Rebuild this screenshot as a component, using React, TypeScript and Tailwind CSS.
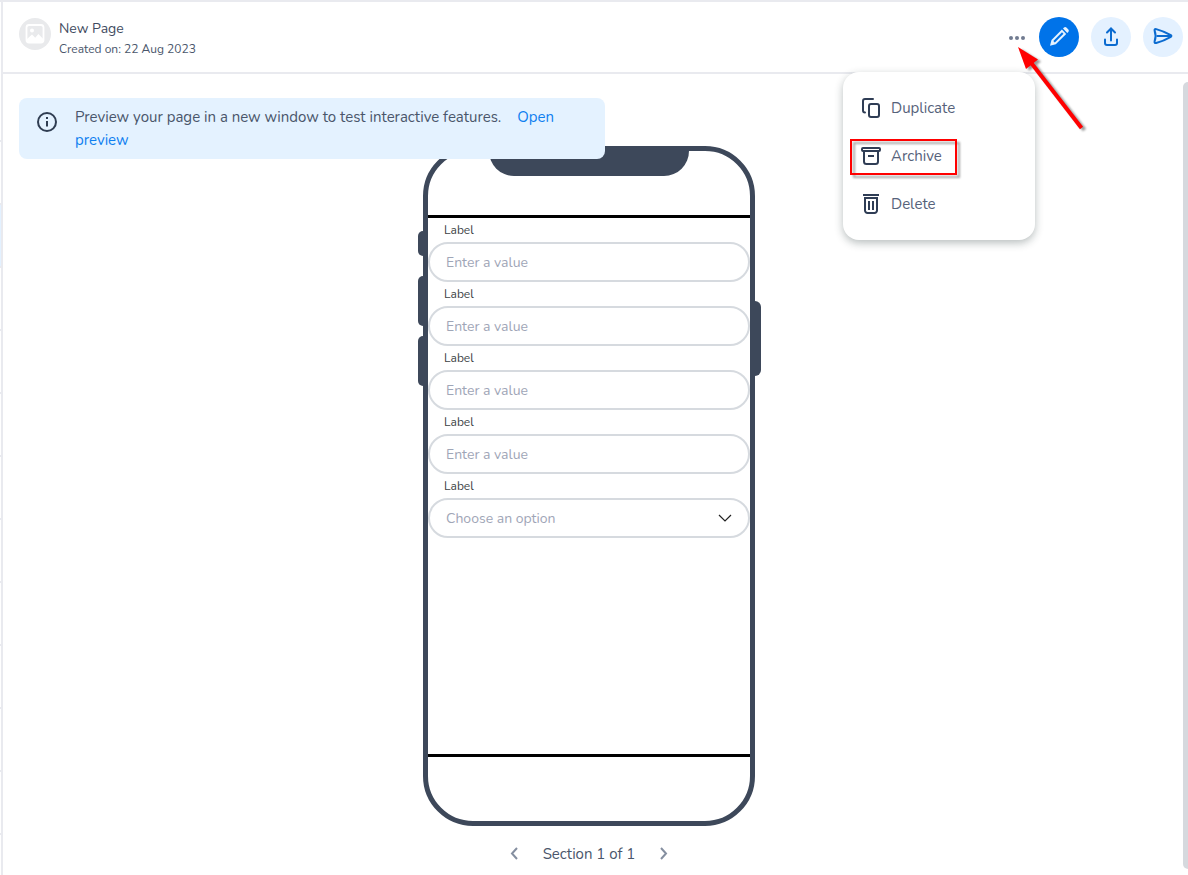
import React, { useState } from 'react';

const sidebarRows = Array.from({ length: 11 }, (_, i) => i);
const textFields = ['field-1', 'field-2', 'field-3', 'field-4'];

function ImageIcon() {
  return (
    <svg className="size-6" viewBox="0 0 24 24" fill="none">
      <rect x="3.5" y="3" width="17" height="17.5" rx="2.5" stroke="white" strokeWidth="1.8" />
      <circle cx="9" cy="8.6" r="2" fill="white" />
      <path d="M4 17l5-4.5 3.2 3.2 3.2-3.7 4.6 4.8V20H4z" fill="white" />
    </svg>
  );
}

function InfoIcon() {
  return (
    <svg className="size-6 shrink-0 text-[#2f3d52]" viewBox="0 0 24 24" fill="none" stroke="currentColor" strokeWidth={2}>
      <circle cx="12" cy="12" r="9" />
      <path d="M12 11v5.5M12 7v2" />
    </svg>
  );
}

function PencilIcon() {
  return (
    <svg className="size-6" viewBox="0 0 24 24" fill="currentColor">
      <path
        fillRule="evenodd"
        d="M3 20.8l1.5-5.8L14.9 4.6l4.3 4.3L8.8 19.3zM6.3 16l1.5 1.5 8.7-8.7-1.5-1.5z"
      />
      <path d="M16 3.6l1-1a1.7 1.7 0 0 1 2.4 0l1.9 1.9a1.7 1.7 0 0 1 0 2.4l-1 1z" />
    </svg>
  );
}

function UploadIcon() {
  return (
    <svg className="size-6" viewBox="0 0 24 24" fill="none" stroke="currentColor" strokeWidth={2} strokeLinecap="round">
      <path d="M12 15.5V4M8 7.5l4-4 4 4" />
      <path d="M6 14.5V18a2 2 0 0 0 2 2h8a2 2 0 0 0 2-2v-3.5" />
    </svg>
  );
}

function SendIcon() {
  return (
    <svg className="size-6" viewBox="0 0 24 24" fill="none" stroke="currentColor" strokeWidth={2} strokeLinejoin="round">
      <path d="M5.2 4.1Q3.2 3.6 3.6 5.6Q5.600 11 3.600 16.400Q3.200 18.500 5.200 18Q12.500 16 19.800 11.800Q21 11 19.800 10.200Q12.500 6 5.200 4.100Z" />
      <path d="M5.500 11H20" />
    </svg>
  );
}

function DuplicateIcon() {
  return (
    <svg className="size-6" viewBox="0 0 24 24" fill="none" stroke="currentColor" strokeWidth={2}>
      <rect x="10" y="8" width="10" height="13" rx="2" />
      <path d="M6 16.500a2 2 0 0 1-2-2V5a2 2 0 0 1 2-2h8" strokeLinecap="round" />
    </svg>
  );
}

function ArchiveIcon() {
  return (
    <svg className="size-6" viewBox="0 0 24 24" fill="none" stroke="currentColor" strokeWidth={2}>
      <rect x="3" y="4" width="18" height="3" rx="1" />
      <path d="M5 7.500V17.500a2.500 2.500 0 0 0 2.500 2.500h9a2.500 2.500 0 0 0 2.500-2.500V7.500M9 12h6" />
    </svg>
  );
}

function DeleteIcon() {
  return (
    <svg className="size-6" viewBox="0 0 24 24" fill="none" stroke="currentColor" strokeWidth={2}>
      <path d="M4 3h16M6 6h12v12.500a2.500 2.500 0 0 1-2.500 2.500h-7a2.500 2.500 0 0 1-2.500-2.500zM10 9v9M14 9v9" />
    </svg>
  );
}

function ChevronIcon({ d }: { d: string }) {
  return (
    <svg className="size-6" viewBox="0 0 24 24" fill="none" stroke="currentColor" strokeWidth={2}>
      <path d={d} />
    </svg>
  );
}

function PointerArrow() {
  return (
    <svg
      className="pointer-events-none absolute top-4 left-2 z-20 h-24 w-20 drop-shadow-[3px_2px_1px_rgba(0,0,0,0.4)]"
      viewBox="0 0 80 96"
    >
      <path d="M14 17L66.500 85" stroke="#ff0000" strokeWidth="4" />
      <path d="M3 4L23 16.500L11 26Z" fill="#ff0000" />
    </svg>
  );
}

function MoreMenu() {
  const [isOpen, setIsOpen] = useState(true);
  const itemClass = 'flex h-12 w-full items-center gap-2 px-4 text-left';

  return (
    <div className="relative flex">
      <button
        aria-label="More actions"
        aria-expanded={isOpen}
        onClick={() => setIsOpen(!isOpen)}
        className="text-[#717b90]"
      >
        <svg className="size-5" viewBox="0 0 20 20" fill="currentColor">
          <circle cx="4" cy="11" r="2" />
          <circle cx="10" cy="11" r="2" />
          <circle cx="16" cy="11" r="2" />
        </svg>
      </button>

      {isOpen && (
        <div className="absolute top-full -right-2 z-10 mt-[25px] w-48 rounded-2xl bg-white py-3 text-[15px] text-[#56627a] shadow-[0_3px_8px_rgba(20,40,40,0.3)]">
          <button className={itemClass}>
            <span className="text-[#2f3d55]"><DuplicateIcon /></span>
            Duplicate
          </button>
          <div className="relative">
            <button className={itemClass}>
              <span className="text-[#2f3d55]"><ArchiveIcon /></span>
              Archive
            </button>
            <span className="pointer-events-none absolute top-[7px] left-[7px] h-9 w-[107px] border-2 border-[#ff0000] drop-shadow-[3px_3px_1px_rgba(0,0,0,0.35)]" />
          </div>
          <button className={itemClass}>
            <span className="text-[#2f3d55]"><DeleteIcon /></span>
            Delete
          </button>
        </div>
      )}

      <PointerArrow />
    </div>
  );
}

function PhonePreview() {
  const fieldClass =
    'block h-10 w-full rounded-full border-2 border-[#d6dadf] bg-white px-4 text-[14px] outline-none';

  return (
    <div className="relative w-[332px] rounded-[50px] border-[5px] border-[#3d485a] bg-white">
      {/* Side buttons */}
      <span className="absolute top-20 -left-2.5 h-[25px] w-[5px] rounded-l-md bg-[#3d485a]" />
      <span className="absolute top-[125px] -left-2.5 h-[50px] w-[5px] rounded-l-md bg-[#3d485a]" />
      <span className="absolute top-[185px] -left-2.5 h-[50px] w-[5px] rounded-l-md bg-[#3d485a]" />
      <span className="absolute top-[150px] -right-[11px] h-[75px] w-1.5 rounded-r-md bg-[#3d485a]" />

      <div className="h-16">
        <div className="mx-auto h-[25px] w-[200px] rounded-b-[28px] bg-[#3d485a]" />
      </div>

      <form className="h-[542px] border-y-[3px] border-black">
        {textFields.map((id) => (
          <div key={id}>
            <label htmlFor={id} className="block pl-4 text-[12px] leading-6 text-[#3c3f45]">Label</label>
            <input id={id} type="text" placeholder="Enter a value" className={`${fieldClass} placeholder:text-[#9fa6b7]`} />
          </div>
        ))}
        <div>
          <label htmlFor="option" className="block pl-4 text-[12px] leading-6 text-[#3c3f45]">Label</label>
          <div className="relative">
            <select id="option" className={`${fieldClass} appearance-none text-[#9fa6b7]`}>
              <option>Choose an option</option>
            </select>
            <svg
              className="pointer-events-none absolute top-3 right-[17px] size-4"
              viewBox="0 0 16 16"
              fill="none"
              stroke="#222"
              strokeWidth="1.2"
            >
              <path d="M2 5l6 6 6-6" />
            </svg>
          </div>
        </div>
      </form>

      <div className="h-16" />
    </div>
  );
}

export default function App() {
  return (
    <div className="flex min-h-screen flex-col border-t-2 border-[#e9eaef] bg-white font-['Nunito','Open_Sans',sans-serif] text-[#4a566b]">
      <div className="flex flex-1">
        {/* Edge of the page list */}
        <aside className="w-[3px] shrink-0 border-r-2 border-[#e9eaef]">
          <div className="h-[140px] border-b-2 border-[#e9eaef]" />
          {sidebarRows.map((row) => (
            <div
              key={row}
              className={`h-[63px] border-b-2 border-[#e9eaef] ${row === 1 ? 'bg-[#e3f1ff]' : ''}`}
            />
          ))}
        </aside>

        <div className="flex min-w-0 flex-1 flex-col">
          {/* Header */}
          <header className="flex h-[72px] items-center gap-2 border-b-2 border-[#e9eaef] pr-[5px] pl-4">
            <div className="mt-4 flex size-8 items-center justify-center self-start rounded-full bg-[#e9eaec]">
              <ImageIcon />
            </div>
            <div className="flex-1 pt-[3px]">
              <h1 className="text-[14px] leading-5 text-[#3f4b60]">New Page</h1>
              <p className="text-[12px] leading-5">Created on: 22 Aug 2023</p>
            </div>
            <div className="flex items-center gap-3">
              <MoreMenu />
              <button aria-label="Edit" className="flex size-10 items-center justify-center rounded-full bg-[#0073e9] text-[#e6f3ff]">
                <PencilIcon />
              </button>
              <button aria-label="Share" className="flex size-10 items-center justify-center rounded-full bg-[#e4f1ff] text-[#0b6bd0]">
                <UploadIcon />
              </button>
              <button aria-label="Send" className="flex size-10 items-center justify-center rounded-full bg-[#e4f1ff] text-[#0b6bd0]">
                <SendIcon />
              </button>
            </div>
          </header>

          {/* Preview */}
          <div className="flex flex-1 gap-2">
            <main className="relative flex flex-1 flex-col items-center pt-[72px]">
              <div className="absolute top-6 left-4 z-10 flex w-1/2 gap-4 rounded-lg bg-[#e4f2ff] px-4 pt-2 pb-[7px]">
                <div className="pt-1"><InfoIcon /></div>
                <p className="text-[15px] leading-[23px]">
                  Preview your page in a new window to test interactive features.{' '}
                  <a href="#preview" className="ml-3 text-[#0f7ff0]">Open preview</a>
                </p>
              </div>

              <PhonePreview />

              <nav className="mt-4 flex items-center gap-4 text-[15px] leading-6">
                <button aria-label="Previous section" className="text-[#858fa0]">
                  <ChevronIcon d="M14 6l-5 5.500 5 5.500" />
                </button>
                <span>Section 1 of 1</span>
                <button aria-label="Next section" className="text-[#858fa0]">
                  <ChevronIcon d="M10 6l5 5.500-5 5.500" />
                </button>
              </nav>
            </main>
            <div className="mt-2 mb-1.5 w-[5px] rounded-l-md bg-[#d6d9de]" />
          </div>
        </div>
      </div>
    </div>
  );
}
